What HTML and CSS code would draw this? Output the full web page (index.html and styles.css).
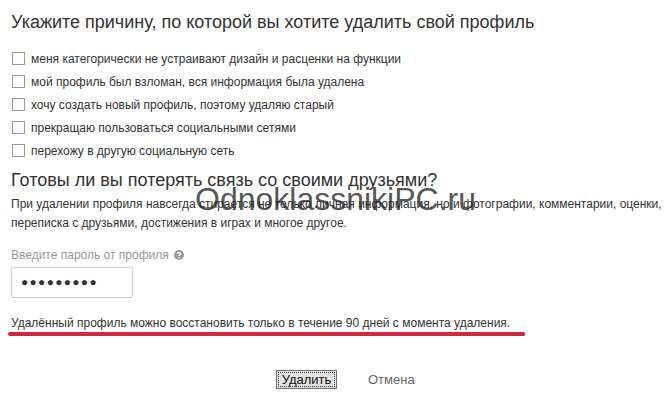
FILE: index.html
```html
<!DOCTYPE html>
<html lang="ru">
<head>
    <meta charset="UTF-8">
    <title>Удаление профиля</title>
    <link rel="stylesheet" href="styles.css">
</head>
<body>

<main class="page">
    <h1 class="title">Укажите причину, по которой вы хотите удалить свой профиль</h1>

    <ul class="reasons">
        <li><span class="chk"></span>меня категорически не устраивают дизайн и расценки на функции</li>
        <li><span class="chk"></span>мой профиль был взломан, вся информация была удалена</li>
        <li><span class="chk"></span>хочу создать новый профиль, поэтому удаляю старый</li>
        <li><span class="chk"></span>прекращаю пользоваться социальными сетями</li>
        <li><span class="chk"></span>перехожу в другую социальную сеть</li>
    </ul>

    <h2 class="title title2">Готовы ли вы потерять связь со своими друзьями?</h2>
    <p class="info">При удалении профиля навсегда стирается не только личная информация, но и фотографии, комментарии, оценки, переписка с друзьями, достижения в играх и многое другое.</p>

    <div class="lbl">Введите пароль от профиля
        <svg class="help" width="10" height="10" viewBox="0 0 10 10">
            <circle cx="5" cy="5" r="5" fill="#9a9a9a"/>
            <path d="M3.4 3.8 C3.4 2.2 6.6 2.2 6.6 3.8 C6.6 4.9 5 4.8 5 6" stroke="#fff" stroke-width="1.3" fill="none"/>
            <circle cx="5" cy="7.7" r="0.75" fill="#fff"/>
        </svg>
    </div>
    <div class="pwd">●●●●●●●●●</div>

    <p class="note">Удалённый профиль можно восстановить только в течение 90 дней с момента удаления.</p>
    <div class="redline"></div>

    <div class="actions">
        <button class="btn">Удалить</button>
        <a class="cancel">Отмена</a>
    </div>

    <div class="wmark">OdnoklassnikiPC.ru</div>
</main>

</body>
</html>
```

FILE: styles.css
```css
body {
  margin: 0;
  background: #fff;
  font-family: 'Liberation Sans', Arial, sans-serif;
  color: #333;
  font-size: 12px;
}

.page {
  position: relative;
  width: 656px;
  padding: 9px 0 0 11px;
}

.title {
  margin: 0;
  font-size: 18px;
  font-weight: normal;
  line-height: 26px;
  color: #333;
}

.reasons {
  list-style: none;
  margin: 12px 0 0 0;
  padding: 0;
}

.reasons li {
  display: flex;
  align-items: center;
  height: 23px;
  padding-left: 1px;
}

.chk {
  display: inline-block;
  width: 11px;
  height: 11px;
  border: 1px solid #999;
  background: #fff;
  margin-right: 6px;
}

.title2 {
  margin-top: 5px;
}

.info {
  margin: 2px 0 0 0;
  line-height: 19px;
}

.lbl {
  margin-top: 14px;
  color: #999;
  line-height: 16px;
}

.help {
  vertical-align: -1px;
  margin-left: 2px;
}

.pwd {
  margin-top: 4px;
  width: 111px;
  height: 29px;
  border: 1px solid #ccc;
  border-radius: 3px;
  padding-left: 9px;
  line-height: 29px;
  font-size: 12px;
  letter-spacing: 1.3px;
  color: #333;
}

.note {
  margin: 17px 0 0 0;
  line-height: 16px;
}

.redline {
  width: 517px;
  height: 4px;
  margin: 1px 0 0 -3px;
  background: #d0283c;
  border-radius: 3px 2px 2px 3px;
}

.actions {
  display: flex;
  align-items: center;
  margin-top: 34px;
  padding-left: 265px;
}

.btn {
  font-family: 'Liberation Sans', Arial, sans-serif;
  font-size: 13px;
  color: #111;
  height: 19px;
  width: 61px;
  padding: 0;
  background: #e3e3e3;
  border: 1px solid #707070;
  outline: 1px dotted #333;
  outline-offset: -3px;
  line-height: 15px;
}

.cancel {
  margin-left: 31px;
  font-size: 13px;
  color: #666;
  cursor: pointer;
}

.wmark {
  position: absolute;
  left: 195px;
  top: 181px;
  font-size: 32px;
  color: rgba(40, 40, 40, 0.8);
}
```
